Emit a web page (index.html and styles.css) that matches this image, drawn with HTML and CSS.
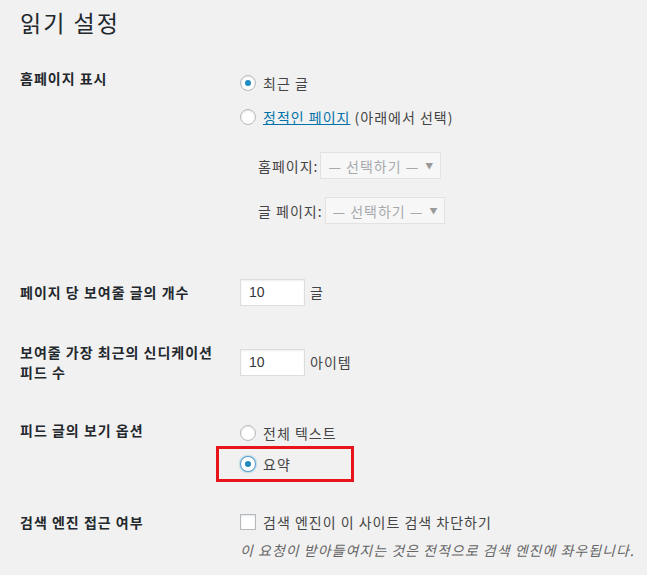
FILE: index.html
```html
<html>
<head>
	<title>읽기 설정</title>
	<meta charset="utf-8">
	<link rel="stylesheet" href="styles.css">
</head>
<body>
	<div class="wrap">
		<h1 class="page-title">읽기 설정</h1>

		<div class="form-row row-front">
			<div class="label">홈페이지 표시</div>
			<div class="field">
				<label class="choice tall"><span class="radio checked"></span>최근 글</label>
				<label class="choice tall"><span class="radio"></span><a href="#">정적인 페이지</a>&nbsp;(아래에서 선택)</label>
				<div class="page-pick">
					<span>홈페이지:</span>
					<span class="select">— 선택하기 — <i>▼</i></span>
				</div>
				<div class="page-pick">
					<span>글 페이지:</span>
					<span class="select">— 선택하기 — <i>▼</i></span>
				</div>
			</div>
		</div>

		<div class="form-row centered row-posts">
			<div class="label">페이지 당 보여줄 글의 개수</div>
			<div class="field"><span class="num">10</span>글</div>
		</div>

		<div class="form-row centered row-feed">
			<div class="label">보여줄 가장 최근의 신디케이션 피드 수</div>
			<div class="field"><span class="num">10</span>아이템</div>
		</div>

		<div class="form-row row-show">
			<div class="label">피드 글의 보기 옵션</div>
			<div class="field">
				<label class="choice"><span class="radio"></span>전체 텍스트</label>
				<div class="highlight">
					<label class="choice"><span class="radio checked focus"></span>요약</label>
				</div>
			</div>
		</div>

		<div class="form-row row-search">
			<div class="label">검색 엔진 접근 여부</div>
			<div class="field">
				<label class="choice short"><span class="checkbox"></span>검색 엔진이 이 사이트 검색 차단하기</label>
				<p class="description">이 요청이 받아들여지는 것은 전적으로 검색 엔진에 좌우됩니다.</p>
			</div>
		</div>
	</div>
</body>
</html>
```

FILE: styles.css
```css
body {
	font-family: "Noto Sans CJK KR", "Noto Sans", sans-serif;
	font-size: 14px;
	line-height: 20px;
	letter-spacing: 1px;
	color: #444444;
	background-color: #f1f1f1;
	margin: 0;
}
.wrap {
	padding: 0 0 0 20px;
}
.page-title {
	font-size: 23px;
	font-weight: 400;
	letter-spacing: 2px;
	color: #23282d;
	margin: 0;
	padding: 8px 0 0;
	line-height: 29px;
}

/* rows */
.form-row {
	display: grid;
	grid-template-columns: 200px 1fr;
	column-gap: 20px;
	align-items: start;
}
.form-row.centered {
	align-items: center;
}
.label {
	font-weight: 700;
	color: #23282d;
}
.row-front {
	margin-top: 29px;
	padding-bottom: 38px;
}
.row-front .label {
	padding-top: 2px;
}
.row-posts {
	height: 60px;
}
.row-feed {
	height: 80px;
}
.row-show {
	padding: 16px 0 16px;
}
.row-show .label {
	padding-top: 2px;
}
.row-search {
	padding-top: 14px;
}

/* radios, checkbox */
.choice {
	display: flex;
	align-items: center;
	height: 30px;
	color: #444444;
	white-space: nowrap;
}
.choice.tall {
	height: 34px;
}
.choice.short {
	height: 20px;
}
.choice a {
	color: #0073aa;
	text-decoration: underline;
}
.radio, .checkbox {
	display: inline-block;
	width: 16px;
	height: 16px;
	border: 1px solid #b4b9be;
	background: #ffffff;
	box-sizing: border-box;
	margin-right: 7px;
	box-shadow: inset 0 1px 2px rgba(0, 0, 0, 0.1);
	flex: none;
}
.radio {
	border-radius: 50%;
	position: relative;
}
.radio.checked::after {
	content: "";
	position: absolute;
	left: 4px;
	top: 4px;
	width: 6px;
	height: 6px;
	border-radius: 50%;
	background: #1e8cbe;
}
.radio.focus {
	border-color: #5b9dd9;
	box-shadow: 0 0 2px rgba(30, 140, 190, 0.8);
}

/* page dropdowns */
.page-pick {
	display: flex;
	align-items: center;
	margin: 18px 0 0 18px;
}
.select {
	display: inline-flex;
	align-items: center;
	height: 27px;
	box-sizing: border-box;
	margin-left: 2px;
	padding: 0 6px 0 7px;
	border: 1px solid #e2e2e2;
	background: #f7f7f7;
	color: #a7aaad;
	white-space: nowrap;
}
.select i {
	font-style: normal;
	font-size: 8px;
	margin-left: 6px;
	color: #9a9a9a;
}

/* number fields */
.row-posts .field, .row-feed .field {
	display: flex;
	align-items: center;
}
.num {
	display: inline-block;
	width: 65px;
	height: 27px;
	line-height: 25px;
	box-sizing: border-box;
	border: 1px solid #dddddd;
	background: #ffffff;
	padding: 0 8px;
	margin-right: 5px;
	box-shadow: inset 0 1px 2px rgba(0, 0, 0, 0.07);
	color: #32373c;
	letter-spacing: 0;
	font-family: "Liberation Sans", sans-serif;
}

/* red marker round the chosen option */
.highlight {
	box-sizing: border-box;
	width: 138px;
	height: 36px;
	margin: -2px 0 0 -24px;
	padding-left: 21px;
	border: 3px solid #e8141b;
}

.description {
	font-style: italic;
	color: #666666;
	margin: 8px 0 0;
	white-space: nowrap;
}
```
